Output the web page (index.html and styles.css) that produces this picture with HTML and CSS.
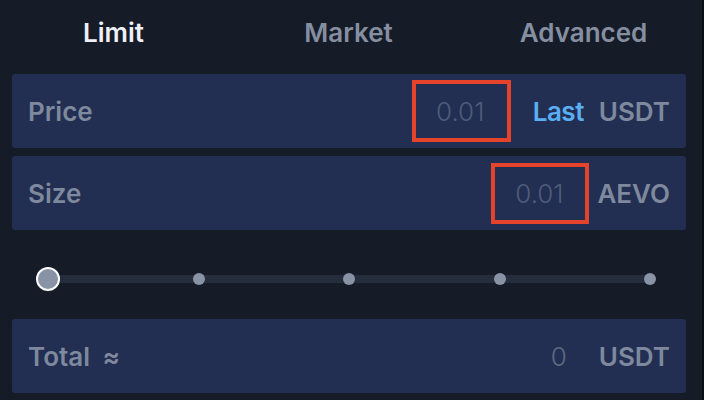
FILE: index.html
```html
<!DOCTYPE html>
<html>
<head>
<meta charset="utf-8">
<link rel="stylesheet" href="styles.css">
</head>
<body>
<div class="app">
  <div class="tabs">
    <div class="tab active">Limit</div>
    <div class="tab">Market</div>
    <div class="tab">Advanced</div>
  </div>
  <div class="form">
    <div class="field">
      <span class="label">Price</span>
      <span class="input price-input">0.01</span>
      <span class="last">Last</span>
      <span class="unit">USDT</span>
    </div>
    <div class="field">
      <span class="label">Size</span>
      <span class="input size-input">0.01</span>
      <span class="unit">AEVO</span>
    </div>
  </div>
  <div class="slider">
    <span class="stop"><span class="knob"></span></span>
    <span class="stop"><span class="dot"></span></span>
    <span class="stop"><span class="dot"></span></span>
    <span class="stop"><span class="dot"></span></span>
    <span class="stop"><span class="dot"></span></span>
  </div>
  <div class="field total">
    <span class="label">Total <span class="approx">≈</span></span>
    <span class="zero">0</span>
    <span class="unit">USDT</span>
  </div>
</div>
</body>
</html>
```
FILE: styles.css
```css
html, body {
  margin: 0;
  padding: 0;
  width: 704px;
  height: 400px;
  overflow: hidden;
  background: #161b28;
}
body {
  font-family: Inter, "Noto Sans", sans-serif;
  box-shadow: inset -2px 0 #0c0f16;
}
.app {
  padding: 0 18px 0 12px;
}
.tabs {
  display: grid;
  grid-template-columns: 235px 235px 235px;
  margin-left: -16px;
  height: 65px;
  line-height: 65px;
  margin-bottom: 9px;
}
.tab {
  text-align: center;
  font-size: 26px;
  font-weight: 600;
  color: #858fa1;
}
.tab.active {
  color: #eef0f6;
}
.form {
  display: flex;
  flex-direction: column;
  gap: 8px;
}
.field {
  height: 74px;
  background: #222f53;
  border-radius: 3px;
  display: flex;
  align-items: center;
  padding: 0 16px 0 16px;
  font-size: 26px;
  font-weight: 600;
  color: #7e899d;
}
.label {
  flex: 1;
}
.input {
  box-sizing: border-box;
  border: 4px solid #e5432a;
  display: flex;
  align-items: center;
  justify-content: center;
  font-weight: 300;
  color: #4f5c7a;
  padding-right: 2px;
}
.price-input {
  width: 99px;
  height: 62px;
  margin-right: 22px;
}
.size-input {
  width: 98px;
  height: 61px;
  margin-right: 8px;
}
.last {
  color: #5aaef4;
  margin-right: 15px;
  letter-spacing: -0.5px;
}
.slider {
  margin: 37px 36px 28px 36px;
  height: 24px;
  display: flex;
  justify-content: space-between;
  align-items: center;
  background: linear-gradient(#262d3c, #262d3c) center / 100% 8px no-repeat;
}
.stop {
  width: 0;
  display: flex;
  justify-content: center;
  align-items: center;
}
.knob {
  flex: none;
  box-sizing: border-box;
  width: 24px;
  height: 24px;
  border-radius: 50%;
  background: #8893a6;
  border: 2px solid #ffffff;
}
.dot {
  flex: none;
  width: 12px;
  height: 12px;
  border-radius: 50%;
  background: #8993a6;
}
.approx {
  margin-left: 6px;
}
.zero {
  font-weight: 300;
  color: #5f6a80;
  margin-right: 32px;
}
```
